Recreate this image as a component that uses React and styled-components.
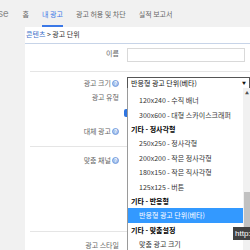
import styled, { createGlobalStyle } from "styled-components";

const Global = createGlobalStyle`
  body {
    margin: 0;
    overflow: hidden;
    font-family: "Noto Sans CJK KR", "Noto Sans", sans-serif;
  }
`;

const Page = styled.div`
  position: relative;
  width: 250px;
  height: 250px;
  overflow: hidden;
  display: flex;
  flex-direction: column;
  background: #fff;
`;

const TopBar = styled.div`
  height: 27px;
  flex: none;
  background: #f1f1f1;
  display: flex;
  align-items: stretch;
  gap: 13px;
  white-space: nowrap;
`;

const Brand = styled.div`
  margin-left: -32px;
  margin-right: 1px;
  display: flex;
  align-items: center;
  font-family: "Liberation Sans", sans-serif;
  font-size: 10px;
  color: #888;
`;

const Tab = styled.div`
  display: flex;
  align-items: center;
  padding-top: 2px;
  font-size: 7px;
  color: ${(p) => (p.$active ? "#3b78e7" : "#666")};
  border-bottom: 2px solid ${(p) => (p.$active ? "#3b78e7" : "transparent")};
`;

const Body = styled.div`
  flex: 1;
  display: flex;
  min-height: 0;
`;

const Sidebar = styled.div`
  width: 25px;
  flex: none;
  background: #f1f1f1;
`;

const Main = styled.div`
  flex: 1;
  min-width: 0;
`;

const Breadcrumb = styled.div`
  height: 17px;
  display: flex;
  align-items: center;
  padding: 0 0 3px 1px;
  box-sizing: border-box;
  border-bottom: 1px solid #c7d4e8;
  font-size: 7px;
  color: #333;
  white-space: nowrap;
  a {
    color: #3b6fc9;
    text-decoration: none;
  }
`;

const Form = styled.div`
  padding-left: 5px;
`;

const Section = styled.div`
  padding: ${(p) => p.$pad || "5px 0 9px"};
  border-bottom: ${(p) => (p.$last ? "none" : "1px solid #e5e5e5")};
`;

const Row = styled.div`
  display: grid;
  grid-template-columns: 89px 118px;
  column-gap: 8px;
  height: ${(p) => p.$h || 12}px;
  margin-top: ${(p) => p.$mt || 0}px;
`;

const Label = styled.div`
  display: flex;
  justify-content: flex-end;
  align-items: center;
  gap: 1px;
  height: 12px;
  margin-top: ${(p) => p.$mt || 0}px;
  font-size: 7px;
  color: #666;
  white-space: nowrap;
`;

const Field = styled.div`
  position: relative;
`;

const Input = styled.div`
  height: 14px;
  border: 1px solid #d9d9d9;
  box-sizing: border-box;
  margin-top: 4px;
`;

const Select = styled.div`
  position: relative;
  height: 12px;
  width: 123px;
  border: 1px solid #555;
  box-sizing: border-box;
  display: flex;
  align-items: center;
  padding: 0 3px;
  font-size: 7px;
  color: #111;
  white-space: nowrap;
  span {
    margin-left: auto;
    font-size: 4px;
  }
`;

const Radio = styled.div`
  position: absolute;
  left: -3px;
  top: 18px;
  width: 8px;
  height: 8px;
  border-radius: 2px;
  background: #2f74e0;
`;

const Dropdown = styled.div`
  position: absolute;
  top: 100%;
  left: -1px;
  width: 123px;
  height: 170px;
  display: flex;
  background: #fff;
  border-left: 1px solid #9a9a9a;
  z-index: 2;
`;

const List = styled.div`
  flex: 1;
  padding-top: 5px;
`;

const Item = styled.div`
  height: 14.4px;
  display: flex;
  align-items: center;
  padding-left: ${(p) => (p.$group ? 3 : 11)}px;
  font-size: 7px;
  font-weight: ${(p) => (p.$group ? 700 : 400)};
  color: ${(p) => (p.$selected ? "#fff" : p.$group ? "#000" : "#333")};
  background: ${(p) => (p.$selected ? "#3399ff" : "transparent")};
  white-space: nowrap;
  overflow: hidden;
`;

const Scrollbar = styled.div`
  width: 8px;
  flex: none;
  background: #f1f1f1;
  display: flex;
  flex-direction: column;
  align-items: center;
  padding-top: 3px;
  font-size: 4px;
  line-height: 5px;
  color: #505050;
`;

const Thumb = styled.div`
  margin-top: 96px;
  width: 7px;
  height: 35px;
  background: #c1c1c1;
`;

const Tooltip = styled.div`
  position: absolute;
  left: 233px;
  top: 227px;
  width: 30px;
  height: 13px;
  background: rgba(40, 40, 40, 0.88);
  color: #fff;
  font-family: "Liberation Sans", sans-serif;
  font-size: 8px;
  line-height: 13px;
  padding-left: 2px;
  white-space: nowrap;
  z-index: 3;
`;

const Help = () => (
  <svg width="7" height="7" viewBox="0 0 14 14">
    <circle cx="7" cy="7" r="6" fill="#a8c4ee" stroke="#5a8ad6" strokeWidth="1.5" />
    <text x="7" y="10.5" fontSize="10" fontFamily="Liberation Sans" fontWeight="700" textAnchor="middle" fill="#fff">
      ?
    </text>
  </svg>
);

const options = [
  { text: "120x240 - 수직 배너" },
  { text: "300x600 - 대형 스카이스크래퍼" },
  { text: "기타 - 정사각형", group: true },
  { text: "250x250 - 정사각형" },
  { text: "200x200 - 작은 정사각형" },
  { text: "180x150 - 작은 직사각형" },
  { text: "125x125 - 버튼" },
  { text: "기타 - 반응형", group: true },
  { text: "반응형 광고 단위(베타)", selected: true },
  { text: "기타 - 맞춤설정", group: true },
  { text: "맞춤 광고 크기" },
];

export default function App() {
  return (
    <Page>
      <Global />
      <TopBar>
        <Brand>AdSense</Brand>
        <Tab>홈</Tab>
        <Tab $active>내 광고</Tab>
        <Tab>광고 허용 및 차단</Tab>
        <Tab>실적 보고서</Tab>
      </TopBar>
      <Body>
        <Sidebar />
        <Main>
          <Breadcrumb>
            <a href="#">콘텐츠</a>&nbsp;&gt; 광고 단위
          </Breadcrumb>
          <Form>
            <Section $pad="0 0 9px">
              <Row $h={18}>
                <Label $mt={3}>이름</Label>
                <Input />
              </Row>
            </Section>
            <Section>
              <Row>
                <Label>
                  광고 크기 <Help />
                </Label>
                <Field>
                  <Select>
                    반응형 광고 단위(베타)
                    <span>▼</span>
                    <Dropdown>
                      <List>
                        {options.map((o) => (
                          <Item key={o.text} $group={o.group} $selected={o.selected}>
                            {o.text}
                          </Item>
                        ))}
                      </List>
                      <Scrollbar>
                        ▲
                        <Thumb />
                      </Scrollbar>
                    </Dropdown>
                  </Select>
                </Field>
              </Row>
              <Row $h={34} $mt={2}>
                <Label>광고 유형</Label>
                <Field>
                  <Radio />
                </Field>
              </Row>
              <Row>
                <Label>
                  대체 광고 <Help />
                </Label>
              </Row>
            </Section>
            <Section $pad="7px 0 0">
              <Row $h={77}>
                <Label>
                  맞춤 채널 <Help />
                </Label>
              </Row>
            </Section>
            <Section $pad="7px 0 0" $last>
              <Row>
                <Label>광고 스타일</Label>
              </Row>
            </Section>
          </Form>
        </Main>
      </Body>
      <Tooltip>http://</Tooltip>
    </Page>
  );
}
